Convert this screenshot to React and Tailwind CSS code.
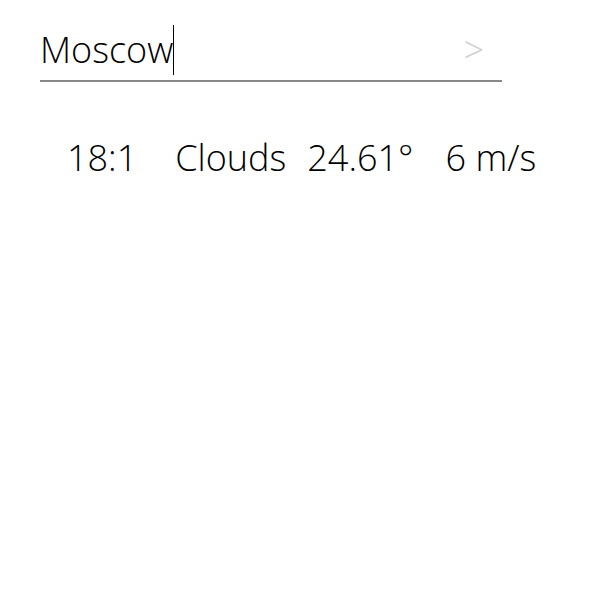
export default function App() {
  return (
    <div className="w-[600px] h-[599px] bg-white font-['Open_Sans',sans-serif] font-light text-black">
      <div className="pt-[23px] pl-[40px]">
        <div className="flex items-center w-[462px] h-[59px] pb-[3px] border-b-2 border-[#888888]">
          <div className="flex-1 flex items-center text-[36px] leading-none">
            <span>Moscow</span>
            <span className="w-px h-[50px] bg-black"></span>
          </div>
          <span className="mr-[18px] text-[36px] text-[#cfcfcf] leading-none">&gt;</span>
        </div>
      </div>
      <div className="flex items-center pl-[67px] mt-[58px] text-[36px] leading-none">
        <span>18:1</span>
        <span className="ml-[38px]">Clouds</span>
        <span className="ml-[21px]">24.61°</span>
        <span className="ml-[32px]">6 m/s</span>
      </div>
    </div>
  );
}
